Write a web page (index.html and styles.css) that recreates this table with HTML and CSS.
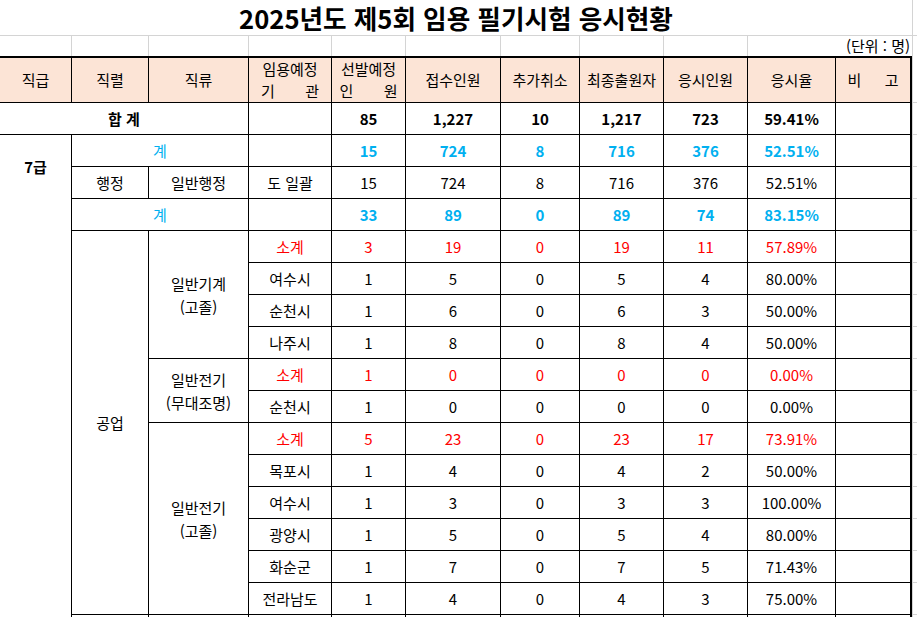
FILE: index.html
```html
<!DOCTYPE html>
<html lang="ko">
<head>
<meta charset="utf-8">
<title>2025년도 제5회 임용 필기시험 응시현황</title>
<link rel="stylesheet" href="styles.css">
</head>
<body>
<table class="sheet">
  <colgroup>
    <col class="c0"><col class="c1"><col class="c2"><col class="c3"><col class="c4"><col class="c5">
    <col class="c6"><col class="c7"><col class="c8"><col class="c9"><col class="c10"><col class="c11">
  </colgroup>
  <tr class="title-row">
    <td class="title" colspan="11">2025년도 제5회 임용 필기시험 응시현황</td>
    <td class="x"></td>
  </tr>
  <tr class="unit-row">
    <td class="g"></td><td class="g"></td><td class="g"></td><td class="g"></td><td class="g"></td>
    <td class="g"></td><td class="g"></td><td class="g"></td><td class="g"></td>
    <td class="unit" colspan="2">(단위 : 명)</td>
    <td class="x xu"></td>
  </tr>
  <tr class="head">
    <th>직급</th>
    <th>직렬</th>
    <th>직류</th>
    <th class="two"><div>임용예정</div><div class="dist"><span>기</span><span>관</span></div></th>
    <th class="two"><div>선발예정</div><div class="dist"><span>인</span><span>원</span></div></th>
    <th>접수인원</th>
    <th>추가취소</th>
    <th>최종출원자</th>
    <th>응시인원</th>
    <th>응시율</th>
    <th class="last"><div class="dist wide"><span>비</span><span>고</span></div></th>
    <td class="x"></td>
  </tr>
  <tr class="r">
    <td class="b" colspan="3">합 계</td>
    <td></td>
    <td class="b">85</td><td class="b">1,227</td><td class="b">10</td><td class="b">1,217</td><td class="b">723</td><td class="b">59.41%</td>
    <td class="last"></td><td class="x"></td>
  </tr>
  <tr class="r">
    <td class="b grade" rowspan="2"><div class="grade-box">7급</div></td>
    <td class="blue" colspan="2">계</td>
    <td></td>
    <td class="blue b">15</td><td class="blue b">724</td><td class="blue b">8</td><td class="blue b">716</td><td class="blue b">376</td><td class="blue b">52.51%</td>
    <td class="last"></td><td class="x"></td>
  </tr>
  <tr class="r">
    <td>행정</td><td>일반행정</td><td>도 일괄</td>
    <td>15</td><td>724</td><td>8</td><td>716</td><td>376</td><td>52.51%</td>
    <td class="last"></td><td class="x"></td>
  </tr>
  <tr class="r">
    <td class="nob" rowspan="14"></td>
    <td class="blue" colspan="2">계</td>
    <td></td>
    <td class="blue b">33</td><td class="blue b">89</td><td class="blue b">0</td><td class="blue b">89</td><td class="blue b">74</td><td class="blue b">83.15%</td>
    <td class="last"></td><td class="x"></td>
  </tr>
  <tr class="r">
    <td rowspan="12">공업</td>
    <td class="multi" rowspan="4">일반기계<br>(고졸)</td>
    <td class="red">소계</td>
    <td class="red">3</td><td class="red">19</td><td class="red">0</td><td class="red">19</td><td class="red">11</td><td class="red">57.89%</td>
    <td class="last"></td><td class="x"></td>
  </tr>
  <tr class="r">
    <td>여수시</td><td>1</td><td>5</td><td>0</td><td>5</td><td>4</td><td>80.00%</td>
    <td class="last"></td><td class="x"></td>
  </tr>
  <tr class="r">
    <td>순천시</td><td>1</td><td>6</td><td>0</td><td>6</td><td>3</td><td>50.00%</td>
    <td class="last"></td><td class="x"></td>
  </tr>
  <tr class="r">
    <td>나주시</td><td>1</td><td>8</td><td>0</td><td>8</td><td>4</td><td>50.00%</td>
    <td class="last"></td><td class="x"></td>
  </tr>
  <tr class="r">
    <td class="multi" rowspan="2">일반전기<br>(무대조명)</td>
    <td class="red">소계</td>
    <td class="red">1</td><td class="red">0</td><td class="red">0</td><td class="red">0</td><td class="red">0</td><td class="red">0.00%</td>
    <td class="last"></td><td class="x"></td>
  </tr>
  <tr class="r">
    <td>순천시</td><td>1</td><td>0</td><td>0</td><td>0</td><td>0</td><td>0.00%</td>
    <td class="last"></td><td class="x"></td>
  </tr>
  <tr class="r">
    <td class="multi" rowspan="6">일반전기<br>(고졸)</td>
    <td class="red">소계</td>
    <td class="red">5</td><td class="red">23</td><td class="red">0</td><td class="red">23</td><td class="red">17</td><td class="red">73.91%</td>
    <td class="last"></td><td class="x"></td>
  </tr>
  <tr class="r">
    <td>목포시</td><td>1</td><td>4</td><td>0</td><td>4</td><td>2</td><td>50.00%</td>
    <td class="last"></td><td class="x"></td>
  </tr>
  <tr class="r">
    <td>여수시</td><td>1</td><td>3</td><td>0</td><td>3</td><td>3</td><td>100.00%</td>
    <td class="last"></td><td class="x"></td>
  </tr>
  <tr class="r">
    <td>광양시</td><td>1</td><td>5</td><td>0</td><td>5</td><td>4</td><td>80.00%</td>
    <td class="last"></td><td class="x"></td>
  </tr>
  <tr class="r">
    <td>화순군</td><td>1</td><td>7</td><td>0</td><td>7</td><td>5</td><td>71.43%</td>
    <td class="last"></td><td class="x"></td>
  </tr>
  <tr class="r">
    <td>전라남도</td><td>1</td><td>4</td><td>0</td><td>4</td><td>3</td><td>75.00%</td>
    <td class="last"></td><td class="x"></td>
  </tr>
  <tr class="r">
    <td></td><td></td><td></td><td></td><td></td><td></td><td></td><td></td><td></td>
    <td class="last"></td><td class="x"></td>
  </tr>
</table>
</body>
</html>
```
FILE: styles.css
```css
html, body {
  margin: 0;
  padding: 0;
  overflow: hidden;
  background: #ffffff;
}

body {
  font-family: "Noto Sans CJK KR", "Noto Sans", sans-serif;
  font-size: 15px;
  color: #000000;
}

.sheet {
  border-collapse: separate;
  border-spacing: 0;
  table-layout: fixed;
  width: 922px;
}

.c0 { width: 72px; }
.c1 { width: 77px; }
.c2 { width: 100px; }
.c3 { width: 83px; }
.c4 { width: 74px; }
.c5 { width: 95px; }
.c6 { width: 79px; }
.c7 { width: 84px; }
.c8 { width: 84px; }
.c9 { width: 88px; }
.c10 { width: 76px; }
.c11 { width: 10px; }

.sheet td,
.sheet th {
  padding: 0;
  text-align: center;
  vertical-align: middle;
  font-weight: normal;
  line-height: 20px;
  white-space: nowrap;
  border-right: 1px solid #000000;
  border-bottom: 1px solid #000000;
}

/* title row */
.title-row { height: 36px; }

.sheet .title {
  border-right: none;
  border-bottom: 1px solid #d4d4d4;
  font-size: 25.6px;
  font-weight: bold;
  line-height: 30px;
}

/* unit row */
.unit-row { height: 20px; }

.sheet .g {
  border-right: 1px solid #d4d4d4;
  border-bottom: none;
}

.sheet .unit {
  border-right: none;
  border-bottom: none;
  text-align: right;
  padding-right: 2px;
  line-height: 20px;
}

/* extra gridline column at the right edge */
.sheet .x {
  border-right: none;
  border-left: 1px solid #d4d4d4;
  border-bottom: 1px solid #d4d4d4;
}

.sheet .xu {
  border-bottom: none;
}

/* header */
.head { height: 46px; }

.sheet th {
  background: #fce4d6;
  border-top: 2px solid #000000;
  line-height: 22px;
}

.sheet .two div {
  width: 58px;
  margin: 0 auto;
}

.sheet .dist {
  display: flex;
  justify-content: space-between;
  margin: 0 auto;
}

.sheet .dist.wide {
  width: 51px;
}

/* body */
.r { height: 32px; }

.sheet .last {
  border-right: 2px solid #000000;
}

.sheet .nob {
  border-bottom: none;
}

.sheet .grade {
  vertical-align: top;
  border-bottom: none;
}

.grade-box {
  height: 64px;
  display: flex;
  align-items: center;
  justify-content: center;
}

.sheet .multi {
  line-height: 23px;
}

.sheet .b { font-weight: bold; }
.sheet .blue { color: #00b0f0; }
.sheet .red { color: #ff0000; }
```
